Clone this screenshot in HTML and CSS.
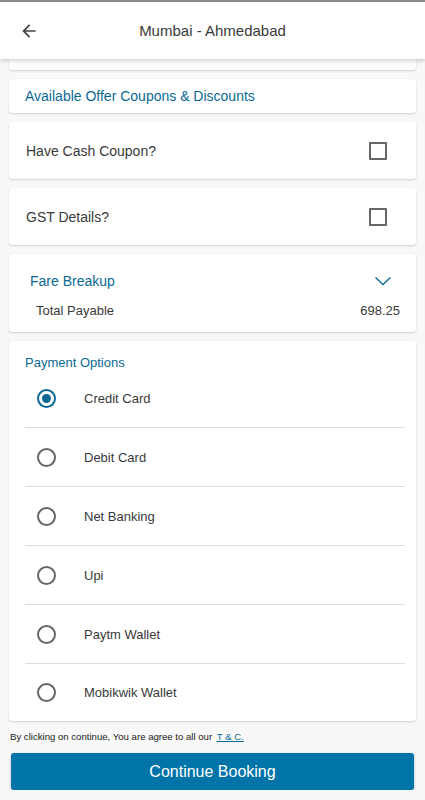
FILE: index.html
```html
<!DOCTYPE html>
<html lang="en">
<head>
    <meta charset="UTF-8">
    <title>Mumbai - Ahmedabad</title>
    <meta name="viewport" content="width=device-width, initial-scale=1.0">
    <link rel="stylesheet" href="styles.css">
</head>
<body>
    <div class="topbar">
        <svg class="back" width="20" height="20" viewBox="0 0 24 24"><path d="M20 11H7.83l5.59-5.59L12 4l-8 8 8 8 1.41-1.41L7.83 13H20v-2z" fill="#444"/></svg>
        <div class="title">Mumbai - Ahmedabad</div>
    </div>
    <div class="content">
        <div class="card card-cut"></div>
        <div class="card offers">Available Offer Coupons &amp; Discounts</div>
        <div class="card check-row">
            <span>Have Cash Coupon?</span>
            <span class="checkbox"></span>
        </div>
        <div class="card check-row">
            <span>GST Details?</span>
            <span class="checkbox"></span>
        </div>
        <div class="card fare">
            <div class="fare-head">
                <span>Fare Breakup</span>
                <svg width="18" height="10" viewBox="0 0 18 10"><path d="M1.5 1.5l7.5 7 7.5-7" fill="none" stroke="#0a6a94" stroke-width="1.3"/></svg>
            </div>
            <div class="fare-total">
                <span>Total Payable</span>
                <span>698.25</span>
            </div>
        </div>
        <div class="card payment">
            <div class="pay-title">Payment Options</div>
            <div class="pay-row"><span class="radio checked"></span>Credit Card</div>
            <div class="pay-row"><span class="radio"></span>Debit Card</div>
            <div class="pay-row"><span class="radio"></span>Net Banking</div>
            <div class="pay-row"><span class="radio"></span>Upi</div>
            <div class="pay-row"><span class="radio"></span>Paytm Wallet</div>
            <div class="pay-row"><span class="radio"></span>Mobikwik Wallet</div>
        </div>
        <p class="terms">By clicking on continue, You are agree to all our <a href="#">T &amp; C.</a></p>
        <button class="continue">Continue Booking</button>
    </div>
</body>
</html>
```

FILE: styles.css
```css
body { margin: 0; font-family: "Liberation Sans", Arial, sans-serif; background: #f8f8f8; color: #3a3a3a; }
.topbar {
    position: relative;
    z-index: 2;
    height: 57px;
    background: #fff;
    border-top: 2px solid #8c8c8c;
    box-shadow: 0 2px 4px rgba(0,0,0,0.18);
    display: flex;
    align-items: center;
}
.back {
    margin-left: 19px;
    flex: none;
}
.title {
    flex: 1;
    text-align: center;
    font-size: 15px;
    color: #3a3a3a;
    margin-right: 39px;
}
.content {
    display: flex;
    flex-direction: column;
    gap: 9px;
}
.card {
    background: #fff;
    margin: 0 9px;
    border-radius: 3px;
    box-shadow: 0 1px 2px rgba(0,0,0,0.16), 0 0 1px rgba(0,0,0,0.08);
}
.card-cut {
    height: 11px;
    border-radius: 0 0 3px 3px;
}
.offers {
    height: 34px;
    display: flex;
    align-items: center;
    padding-left: 16px;
    font-size: 14px;
    color: #0a6a94;
}
.check-row {
    height: 57px;
    display: flex;
    align-items: center;
    justify-content: space-between;
    padding: 0 29px 0 17px;
    font-size: 14px;
}
.checkbox {
    width: 14px;
    height: 14px;
    border: 2px solid #666;
    border-radius: 1px;
}
.fare {
    height: 78px;
    box-sizing: border-box;
    padding: 18px 16px 0 21px;
}
.fare-head {
    display: flex;
    justify-content: space-between;
    align-items: center;
    font-size: 14px;
    color: #0a6a94;
    height: 18px;
    padding-right: 8px;
}
.fare-total {
    display: flex;
    justify-content: space-between;
    font-size: 13px;
    margin-top: 13px;
    padding-left: 6px;
}
.payment {
    padding: 14px 11px 0 16px;
}
.pay-title {
    font-size: 13px;
    color: #0a6a94;
    height: 14px;
}
.pay-row {
    height: 58px;
    display: flex;
    align-items: center;
    font-size: 13px;
    border-bottom: 1px solid #ddd;
}
.pay-row:first-of-type { height: 57px; }
.pay-row:last-child { border-bottom: none; height: 57px; }
.radio {
    width: 15px;
    height: 15px;
    border: 2px solid #666;
    border-radius: 50%;
    margin: 0 28px 0 12px;
    box-sizing: content-box;
    position: relative;
}
.radio.checked {
    border-color: #0a6a94;
}
.radio.checked::after {
    content: "";
    position: absolute;
    left: 3px;
    top: 3px;
    width: 9px;
    height: 9px;
    border-radius: 50%;
    background: #0a6a94;
}
.terms {
    margin: 1px 0 0 10px;
    font-size: 9.6px;
    color: #222;
}
.terms a {
    color: #0a6a94;
    margin-left: 2px;
}
.continue {
    margin: 2px 11px 0 11px;
    height: 37px;
    background: #0074a9;
    color: #fff;
    border: none;
    border-radius: 3px;
    font-family: inherit;
    font-size: 16px;
    box-shadow: 0 1px 3px rgba(0,0,0,0.25);
}
```
